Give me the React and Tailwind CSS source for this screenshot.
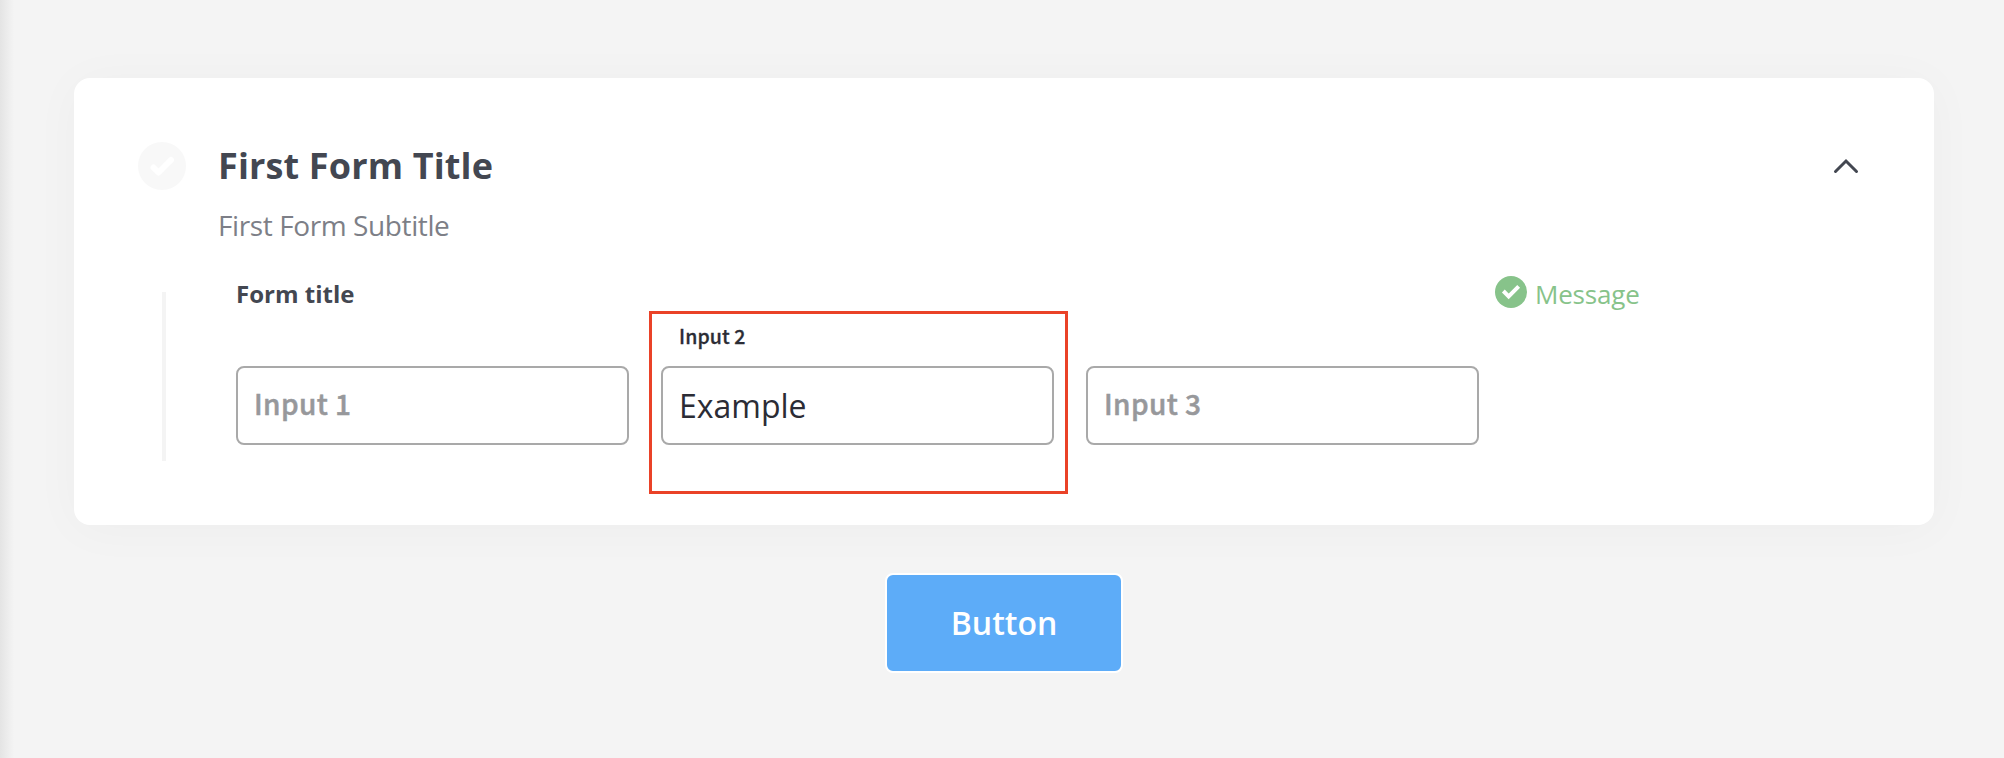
function StatusCheck({ className, path, cap, join }) {
  return (
    <svg className={className} viewBox="0 0 48 48" fill="none" aria-hidden="true">
      <circle cx="24" cy="24" r="24" fill="currentColor" />
      <path d={path} stroke="white" strokeWidth="6" strokeLinecap={cap} strokeLinejoin={join} />
    </svg>
  );
}

function Field({ label, value }) {
  return (
    <div className="flex h-[79px] w-[393px] items-center rounded-lg border-2 border-[#a9a9a9] bg-white px-4">
      {value ? (
        <span className="text-[32px] leading-10 text-[#2b2c35]">{value}</span>
      ) : (
        <span className="pb-1.5 font-['Noto_Sans_CJK_SC',sans-serif] text-[28px] leading-10 font-medium tracking-[0.4px] text-[#97989b] [-webkit-text-stroke:0.5px_#97989b]">
          {label}
        </span>
      )}
    </div>
  );
}

export default function App() {
  return (
    <div className="relative flex h-[758px] w-[2004px] flex-col overflow-hidden bg-[#f4f4f4] pt-[78px] pl-[74px] font-['Open_Sans',sans-serif]">
      <div className="absolute inset-y-0 left-0 w-3.5 bg-linear-to-r from-[#e4e4e4] to-[#f4f4f4]" />

      <section className="flex h-[447px] w-[1860px] flex-col rounded-2xl bg-white pt-16 pl-16 shadow-[0_4px_50px_rgba(0,40,20,0.03)]">
        <header className="flex h-12 items-center">
          <StatusCheck className="size-12 text-[#f8f8f8]" path="M15.5 25.5 20.5 30.5 33 18" cap="round" join="round" />
          <h1 className="ml-8 text-[36px] leading-[48px] font-bold tracking-[0.15px] text-[#434751]">First Form Title</h1>
          <svg className="mr-[75px] ml-auto h-4 w-[26px] text-[#434751]" viewBox="0 0 26 16" fill="none">
            <path d="M2.5 13.5 13 3 23.5 13.5" stroke="currentColor" strokeWidth="3" strokeLinecap="round" />
          </svg>
        </header>
        <p className="mt-[15px] ml-20 h-10 text-[28px] leading-10 tracking-[-0.4px] text-[#7d7f87]">First Form Subtitle</p>

        <div className="mt-[31px] flex">
          <div className="mt-4 ml-6 h-[169px] w-1 bg-[#f4f4f4]" />
          <div className="ml-[70px]">
            <div className="flex h-8 items-center">
              <h2 className="w-[1259px] pt-1 text-[24px] leading-8 font-bold text-[#434751]">Form title</h2>
              <StatusCheck className="size-8 text-[#87c38a]" path="M12.5 22.5 20.5 30.5 35.5 15.5" cap="butt" join="miter" />
              <span className="ml-2 pt-1 text-[26px] leading-8 tracking-[-0.2px] text-[#87c38a]">Message</span>
            </div>
            <div className="mt-[58px] flex gap-8">
              <Field label="Input 1" />
              <div className="relative">
                <div className="absolute -top-[55px] -left-3 h-[183px] w-[419px] border-[3px] border-[#ea4228]">
                  <div className="mt-1.5 ml-[27px] font-['Noto_Sans_CJK_SC',sans-serif] text-[19.5px] leading-8 font-medium tracking-[0.1px] text-[#2b2c35] [-webkit-text-stroke:0.3px_#2b2c35]">
                    Input 2
                  </div>
                </div>
                <Field value="Example" />
              </div>
              <Field label="Input 3" />
            </div>
          </div>
        </div>
      </section>

      <button className="mt-12 ml-[811px] h-[100px] w-[238px] rounded-lg border-2 border-white bg-[#5dacf8] text-[32px] font-semibold text-white">
        Button
      </button>
    </div>
  );
}
